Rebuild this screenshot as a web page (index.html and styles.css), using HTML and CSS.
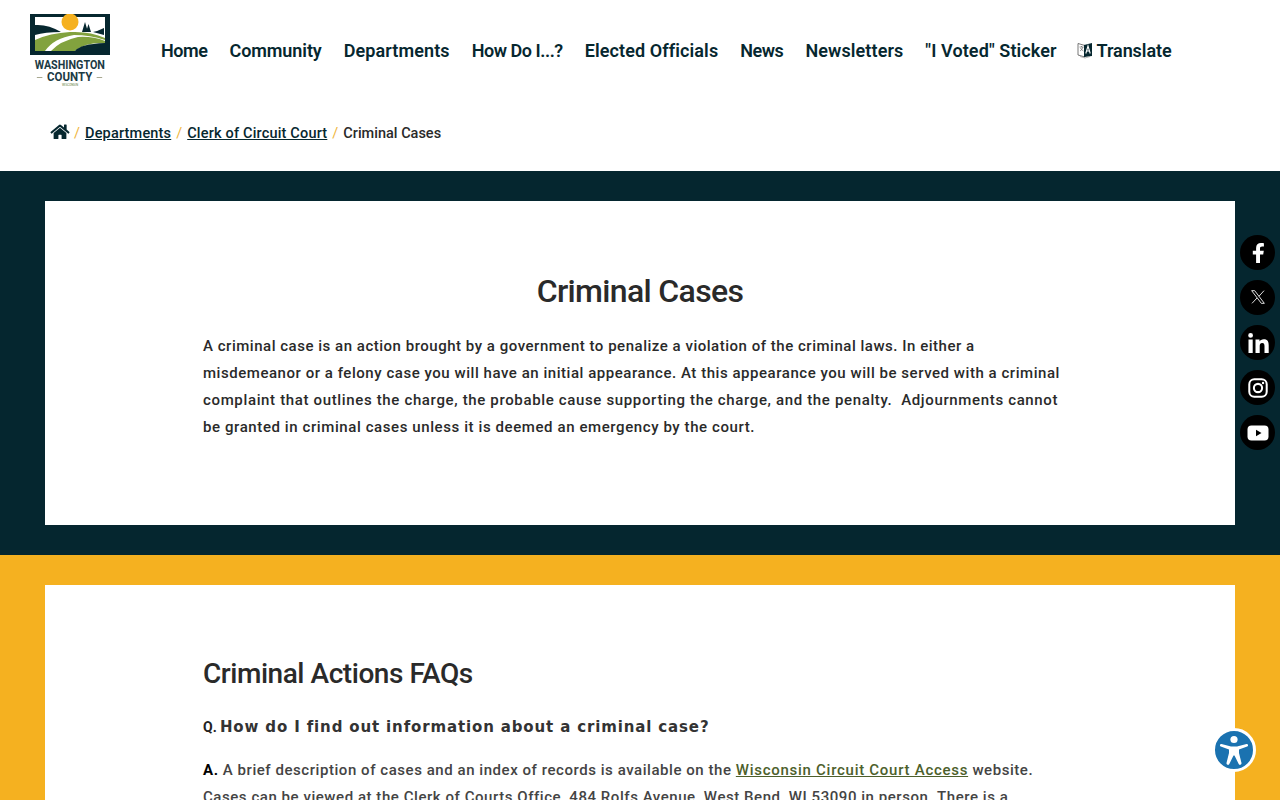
FILE: index.html
```html
<!DOCTYPE html>
<html lang="en">
<head>
<meta charset="utf-8">
<title>Criminal Cases</title>
<link rel="stylesheet" href="styles.css">
</head>
<body>
<header class="site-header">
  <a class="logo" href="#" aria-label="Washington County">
    <svg class="logo-art" viewBox="0 0 80 41" width="80" height="41">
      <rect width="80" height="41" fill="#06272f"/>
      <rect x="5" y="3" width="70" height="34" fill="#fff"/>
      <path d="M5 11 Q18 10 31 18 Q15 18 5 21Z" fill="#06272f"/>
      <path d="M74 14 L74 21 L63 18 Q68 17 74 14Z" fill="#06272f"/>
      <path d="M52 18 l3 -10 l3 10z M56 18 l2.500 -8 l2.500 8z" fill="#06272f"/>
      <path d="M5 37 V26 Q20 19 40 18 Q60 17 75 24 V26 Q60 21 44 21 Q24 24 15 37Z" fill="#82a23e"/>
      <path d="M21 37 Q30 27 48 23 Q62 22 75 27 V29 Q55 28 45 37Z" fill="#82a23e"/>
      <path d="M45 37 Q50 30 75 29 V37Z" fill="#06272f"/>
      <circle cx="40" cy="8" r="8.500" fill="#f5b120"/>
    </svg>
    <span class="logo-name">WASHINGTON</span>
    <span class="logo-county"><i class="logo-dash"></i>COUNTY<i class="logo-dash"></i></span>
    <span class="logo-state">WISCONSIN</span>
  </a>
  <nav class="main-nav">
    <a href="#" class="nav-tight">Home</a>
    <a href="#">Community</a>
    <a href="#" class="nav-wide">Departments</a>
    <a href="#" class="nav-tight">How Do I...?</a>
    <a href="#" class="nav-wide">Elected Officials</a>
    <a href="#" class="nav-tight">News</a>
    <a href="#" class="nav-wide">Newsletters</a>
    <a href="#" class="nav-wide">"I Voted" Sticker</a>
    <a href="#" class="translate">
      <svg viewBox="0 0 16 18" width="16" height="18"><path d="M1 2.500 L8 4.500 V16 L1 14Z" fill="#fff" stroke="#555" stroke-width=".8"/><path d="M7 4 L15 2 V15 L7 16Z" fill="#06272f"/><path d="M8.800 12.500 l2.200 -7.500 l2.200 7.500 M9.600 10 h2.800" stroke="#fff" stroke-width="1.100" fill="none"/><path d="M2.500 6 h4 M4.500 5 v1 M3 10 q2 -1 3 -4 M3.500 7 q1 2 3 3" stroke="#555" stroke-width=".6" fill="none"/><path d="M3 15.500 L8 17 L13 15.500" stroke="#888" stroke-width=".6" fill="none"/></svg>
      Translate
    </a>
  </nav>
</header>

<div class="breadcrumb">
  <a href="#" class="home" aria-label="Home">
    <svg viewBox="0 0 576 512" width="20" height="17"><path fill="#06272f" d="M280 148 L96 300 V464 a16 16 0 0 0 16 16 l112 0 a16 16 0 0 0 16 -16 V368 a16 16 0 0 1 16 -16 h64 a16 16 0 0 1 16 16 v96 a16 16 0 0 0 16 16 l112 0 a16 16 0 0 0 16 -16 V300 L296 148 a12 12 0 0 0 -16 0Z M571 268 L488 199 V60 a12 12 0 0 0 -12 -12 h-56 a12 12 0 0 0 -12 12 v73 L318 58 a48 48 0 0 0 -61 0 L4 268 a12 12 0 0 0 -1.600 17 l25.500 31 a12 12 0 0 0 17 1.600 L280 124 a12 12 0 0 1 15 0 L531 318 a12 12 0 0 0 17 -1.600 l25.500 -31 a12 12 0 0 0 -1.700 -17Z"/></svg>
  </a>
  <span class="sep">/</span>
  <a href="#" class="crumb">Departments</a>
  <span class="sep">/</span>
  <a href="#" class="crumb">Clerk of Circuit Court</a>
  <span class="sep">/</span>
  <span class="current">Criminal Cases</span>
</div>

<section class="band band-dark">
  <div class="card card-intro">
    <h1>Criminal Cases</h1>
    <p><span class="l1">A criminal case is an action brought by a government to penalize a violation of the criminal laws. In either a</span><br><span class="l2">misdemeanor or a felony case you will have an initial appearance. At this appearance you will be served with a criminal</span><br><span class="l3">complaint that outlines the charge, the probable cause supporting the charge, and the penalty.&nbsp; Adjournments cannot</span><br><span class="l4">be granted in criminal cases unless it is deemed an emergency by the court.</span></p>
  </div>
</section>

<section class="band band-yellow">
  <div class="card card-faq">
    <h2>Criminal Actions FAQs</h2>
    <p class="question"><span class="q-mark">Q.</span> <strong>How do I find out information about a criminal case?</strong></p>
    <p class="answer"><b>A.</b> A brief description of cases and an index of records is available on the <a href="#">Wisconsin Circuit Court Access</a> website.<br>Cases can be viewed at the Clerk of Courts Office, 484 Rolfs Avenue, West Bend, WI 53090 in person. There is a</p>
  </div>
</section>

<aside class="social">
  <a href="#" aria-label="Facebook"><svg viewBox="0 0 24 24" width="24" height="24"><path fill="#fff" d="M14 22 V13.500 h3.200 l.6 -3.800 H14 V7.600 c0 -1.200 .5 -2 2.100 -2 h1.800 V2.300 c-.6 -.1 -1.700 -.2 -2.900 -.2 -3 0 -4.900 1.800 -4.900 5 v2.600 H6.800 v3.800 h3.300 V22Z"/></svg></a>
  <a href="#" aria-label="X"><svg class="x-icon" viewBox="0 0 24 24" width="16" height="16"><path fill="none" stroke="#fff" stroke-width="1.300" d="M2.500 2.500 h4.500 L21.500 21.500 h-4.500Z M21 2.500 L13.500 10.800 M10.500 13.500 L3 21.500"/></svg></a>
  <a href="#" aria-label="LinkedIn"><svg viewBox="0 0 24 24" width="24" height="24"><path fill="#fff" d="M2.500 8.500 h4.200 V22 H2.500Z M4.600 2 a2.400 2.400 0 1 1 0 4.800 a2.400 2.400 0 0 1 0 -4.800Z M9.500 8.500 h4 v1.900 c.7 -1.200 2.200 -2.200 4.200 -2.200 4.200 0 5 2.700 5 6.300 V22 h-4.200 v-6.700 c0 -1.700 -.2 -3.400 -2.300 -3.400 -2.100 0 -2.500 1.600 -2.500 3.300 V22 H9.500Z"/></svg></a>
  <a href="#" aria-label="Instagram"><svg viewBox="0 0 24 24" width="22" height="22"><rect x="2.500" y="2.500" width="19" height="19" rx="5.500" fill="none" stroke="#fff" stroke-width="2.200"/><circle cx="12" cy="12" r="4.500" fill="none" stroke="#fff" stroke-width="2.200"/><circle cx="17.500" cy="6.500" r="1.300" fill="#fff"/></svg></a>
  <a href="#" aria-label="YouTube"><svg viewBox="0 0 24 24" width="24" height="24"><rect x="1.500" y="4.500" width="21" height="15" rx="4" fill="#fff"/><path d="M10 8.800 L15.500 12 L10 15.200Z" fill="#000"/></svg></a>
</aside>

<a href="#" class="a11y" aria-label="Accessibility">
  <svg viewBox="0 0 44 44" width="44" height="44"><circle cx="22" cy="22" r="20.500" fill="#1a72b0" stroke="#fff" stroke-width="3"/><circle cx="22" cy="11.500" r="3.600" fill="#fff"/><path fill="#fff" d="M9.500 16 L19 18.500 h6 L34.500 16 a1.300 1.300 0 0 1 .7 2.500 L27 21.500 V25 L29.500 35 a1.500 1.500 0 0 1 -2.800 1 L22.500 27.500 h-1 L17.300 36 a1.500 1.500 0 0 1 -2.800 -1 L17 25 V21.500 L8.800 18.500 a1.300 1.300 0 0 1 .7 -2.500Z"/></svg>
</a>
</body>
</html>
```

FILE: styles.css
```css
* { box-sizing: border-box; }
html, body { margin: 0; padding: 0; height: 800px; overflow: hidden; }
body { font-family: Roboto, "Liberation Sans", sans-serif; color: #2a2a2a; background: #fff; }
a { color: inherit; }

.site-header { display: flex; align-items: flex-start; height: 100px; padding: 14px 0 0 30px; }
.logo { display: flex; flex-direction: column; align-items: center; width: 80px; text-decoration: none; color: #1b3a44; }
.logo-art { display: block; }
.logo-name { font-size: 12.500px; line-height: 12px; margin-top: 4px; font-weight: 700; transform: scaleX(.86); white-space: nowrap; }
.logo-county { display: flex; align-items: center; gap: 5px; font-size: 12.500px; line-height: 12px; font-weight: 700; transform: scaleX(.92); }
.logo-dash { display: block; width: 6px; height: 1px; background: #a8a890; }
.logo-state { font-size: 3px; line-height: 4px; color: #5d7a3a; }

.main-nav { display: flex; align-items: center; gap: 22px; margin-left: 51px; height: 72px; color: #06272f; font-size: 18px; font-weight: 600; letter-spacing: -.08px; }
.main-nav a { text-decoration: none; white-space: nowrap; }
.main-nav .nav-tight { letter-spacing: -.45px; }
.main-nav .nav-wide { letter-spacing: .1px; }
.translate { display: flex; align-items: center; gap: 4px; margin-left: -2px; }

.breadcrumb { display: flex; align-items: center; gap: 5px; height: 71px; padding: 0 0 5px 50px; font-size: 14.500px; font-weight: 500; color: #06272f; }
.crumb { letter-spacing: .18px; }
.breadcrumb .current { color: #2a2a2a; }
.home { display: flex; margin: -3px -1px 0 0; }
.sep { color: #f0b640; font-weight: 400; }

.band { padding: 30px 45px; }
.band-dark { background: #05262f; height: 384px; }
.band-yellow { background: #f5b120; height: 300px; }
.card { background: #fff; }
.card-intro { height: 324px; padding: 70px 158px 0; }
.card-faq { height: 400px; padding: 71px 158px 0; }

h1 { margin: 0 0 22px; text-align: center; font-size: 32px; line-height: 40px; font-weight: 500; letter-spacing: -.65px; color: #2a2a2a; }
h2 { margin: 0 0 22px; font-size: 28px; line-height: 36px; font-weight: 500; letter-spacing: -.45px; color: #2a2a2a; }
.card p { margin: 0; white-space: nowrap; font-size: 15px; line-height: 27px; letter-spacing: .5px; }
.card-intro p { font-weight: 500; color: #2a2a2a; }
.card-intro .l1 { letter-spacing: .52px; }
.card-intro .l2 { letter-spacing: .54px; }
.card-intro .l3 { letter-spacing: .65px; }
.card-intro .l4 { letter-spacing: .59px; }
.question { color: #222; }
.q-mark { font-size: 14px; font-weight: 700; letter-spacing: 0; }
.question strong { margin-left: -1px; color: #333; font-family: "DejaVu Sans", sans-serif; font-size: 15px; font-weight: 700; letter-spacing: .86px; }
.card .answer { margin-top: 16px; color: #444; font-weight: 500; letter-spacing: .55px; }
.answer b { color: #000; }
.answer a { color: #4d5f2c; letter-spacing: .72px; }

.social { position: fixed; top: 235px; right: 5px; display: flex; flex-direction: column; gap: 10px; }
.social a { display: flex; align-items: center; justify-content: center; width: 35px; height: 35px; border-radius: 50%; background: #000; }
.x-icon { margin-top: -2px; }

.a11y { position: fixed; left: 1212px; top: 728px; display: block; width: 44px; height: 44px; }
```
